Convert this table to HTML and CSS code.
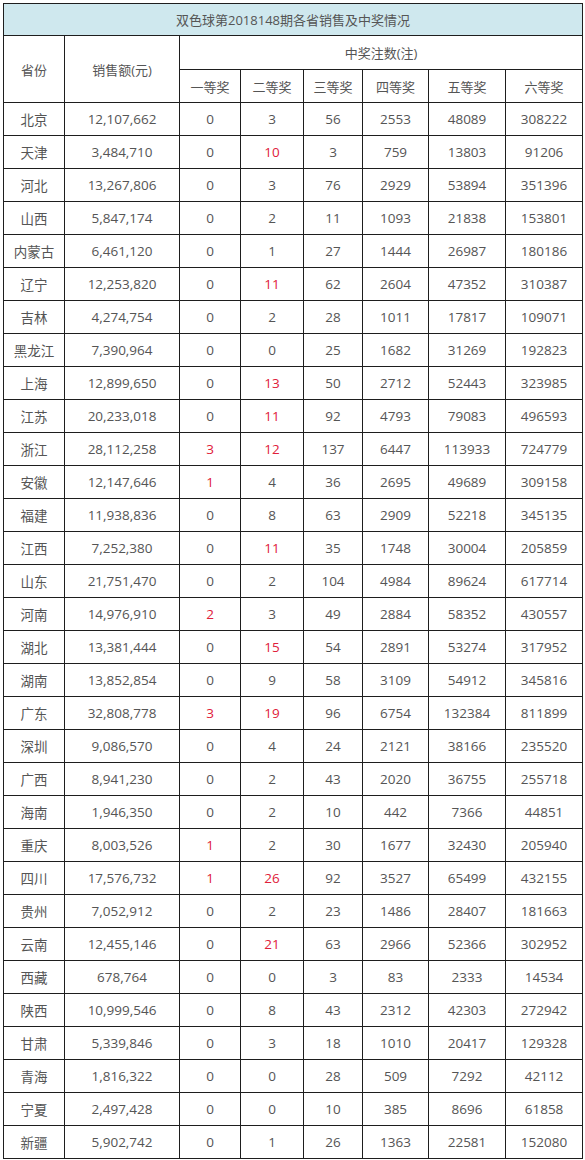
FILE: index.html
```html
<!DOCTYPE html>
<html lang="zh-CN">
<head>
<meta charset="utf-8">
<title>双色球第2018148期各省销售及中奖情况</title>
<link rel="stylesheet" href="styles.css">
</head>
<body>
<table class="lottery">
<colgroup>
<col class="c-prov"><col class="c-sales"><col class="c-p1"><col class="c-p2"><col class="c-p3"><col class="c-p4"><col class="c-p5"><col class="c-p6">
</colgroup>
<thead>
<tr class="title-row"><th colspan="8">双色球第2018148期各省销售及中奖情况</th></tr>
<tr class="head-row"><th rowspan="2">省份</th><th rowspan="2">销售额(元)</th><th colspan="6">中奖注数(注)</th></tr>
<tr class="head-row"><th>一等奖</th><th>二等奖</th><th>三等奖</th><th>四等奖</th><th>五等奖</th><th>六等奖</th></tr>
</thead>
<tbody>
<tr><td>北京</td><td>12,107,662</td><td>0</td><td>3</td><td>56</td><td>2553</td><td>48089</td><td>308222</td></tr>
<tr><td>天津</td><td>3,484,710</td><td>0</td><td class="red">10</td><td>3</td><td>759</td><td>13803</td><td>91206</td></tr>
<tr><td>河北</td><td>13,267,806</td><td>0</td><td>3</td><td>76</td><td>2929</td><td>53894</td><td>351396</td></tr>
<tr><td>山西</td><td>5,847,174</td><td>0</td><td>2</td><td>11</td><td>1093</td><td>21838</td><td>153801</td></tr>
<tr><td>内蒙古</td><td>6,461,120</td><td>0</td><td>1</td><td>27</td><td>1444</td><td>26987</td><td>180186</td></tr>
<tr><td>辽宁</td><td>12,253,820</td><td>0</td><td class="red">11</td><td>62</td><td>2604</td><td>47352</td><td>310387</td></tr>
<tr><td>吉林</td><td>4,274,754</td><td>0</td><td>2</td><td>28</td><td>1011</td><td>17817</td><td>109071</td></tr>
<tr><td>黑龙江</td><td>7,390,964</td><td>0</td><td>0</td><td>25</td><td>1682</td><td>31269</td><td>192823</td></tr>
<tr><td>上海</td><td>12,899,650</td><td>0</td><td class="red">13</td><td>50</td><td>2712</td><td>52443</td><td>323985</td></tr>
<tr><td>江苏</td><td>20,233,018</td><td>0</td><td class="red">11</td><td>92</td><td>4793</td><td>79083</td><td>496593</td></tr>
<tr><td>浙江</td><td>28,112,258</td><td class="red">3</td><td class="red">12</td><td>137</td><td>6447</td><td>113933</td><td>724779</td></tr>
<tr><td>安徽</td><td>12,147,646</td><td class="red">1</td><td>4</td><td>36</td><td>2695</td><td>49689</td><td>309158</td></tr>
<tr><td>福建</td><td>11,938,836</td><td>0</td><td>8</td><td>63</td><td>2909</td><td>52218</td><td>345135</td></tr>
<tr><td>江西</td><td>7,252,380</td><td>0</td><td class="red">11</td><td>35</td><td>1748</td><td>30004</td><td>205859</td></tr>
<tr><td>山东</td><td>21,751,470</td><td>0</td><td>2</td><td>104</td><td>4984</td><td>89624</td><td>617714</td></tr>
<tr><td>河南</td><td>14,976,910</td><td class="red">2</td><td>3</td><td>49</td><td>2884</td><td>58352</td><td>430557</td></tr>
<tr><td>湖北</td><td>13,381,444</td><td>0</td><td class="red">15</td><td>54</td><td>2891</td><td>53274</td><td>317952</td></tr>
<tr><td>湖南</td><td>13,852,854</td><td>0</td><td>9</td><td>58</td><td>3109</td><td>54912</td><td>345816</td></tr>
<tr><td>广东</td><td>32,808,778</td><td class="red">3</td><td class="red">19</td><td>96</td><td>6754</td><td>132384</td><td>811899</td></tr>
<tr><td>深圳</td><td>9,086,570</td><td>0</td><td>4</td><td>24</td><td>2121</td><td>38166</td><td>235520</td></tr>
<tr><td>广西</td><td>8,941,230</td><td>0</td><td>2</td><td>43</td><td>2020</td><td>36755</td><td>255718</td></tr>
<tr><td>海南</td><td>1,946,350</td><td>0</td><td>2</td><td>10</td><td>442</td><td>7366</td><td>44851</td></tr>
<tr><td>重庆</td><td>8,003,526</td><td class="red">1</td><td>2</td><td>30</td><td>1677</td><td>32430</td><td>205940</td></tr>
<tr><td>四川</td><td>17,576,732</td><td class="red">1</td><td class="red">26</td><td>92</td><td>3527</td><td>65499</td><td>432155</td></tr>
<tr><td>贵州</td><td>7,052,912</td><td>0</td><td>2</td><td>23</td><td>1486</td><td>28407</td><td>181663</td></tr>
<tr><td>云南</td><td>12,455,146</td><td>0</td><td class="red">21</td><td>63</td><td>2966</td><td>52366</td><td>302952</td></tr>
<tr><td>西藏</td><td>678,764</td><td>0</td><td>0</td><td>3</td><td>83</td><td>2333</td><td>14534</td></tr>
<tr><td>陕西</td><td>10,999,546</td><td>0</td><td>8</td><td>43</td><td>2312</td><td>42303</td><td>272942</td></tr>
<tr><td>甘肃</td><td>5,339,846</td><td>0</td><td>3</td><td>18</td><td>1010</td><td>20417</td><td>129328</td></tr>
<tr><td>青海</td><td>1,816,322</td><td>0</td><td>0</td><td>28</td><td>509</td><td>7292</td><td>42112</td></tr>
<tr><td>宁夏</td><td>2,497,428</td><td>0</td><td>0</td><td>10</td><td>385</td><td>8696</td><td>61858</td></tr>
<tr><td>新疆</td><td>5,902,742</td><td>0</td><td>1</td><td>26</td><td>1363</td><td>22581</td><td>152080</td></tr>
</tbody>
</table>
</body>
</html>
```
FILE: styles.css
```css
html, body {
  margin: 0;
  padding: 0;
  background: #ffffff;
}
body {
  padding: 3px 0 0 3px;
  font-family: "Open Sans", "Noto Sans CJK SC", sans-serif;
  font-size: 13px;
  color: #555555;
}
.lottery {
  border-collapse: collapse;
  table-layout: fixed;
  width: 579px;
}
.c-prov { width: 61px; }
.c-sales { width: 115px; }
.c-p1 { width: 61px; }
.c-p2 { width: 63px; }
.c-p3 { width: 59px; }
.c-p4 { width: 66px; }
.c-p5 { width: 77px; }
.c-p6 { width: 77px; }
.lottery th,
.lottery td {
  border: 1px solid #1e1e1e;
  padding: 0;
  text-align: center;
  vertical-align: middle;
  font-weight: normal;
  white-space: nowrap;
}
.title-row th {
  height: 31px;
  background: #cfe8ee;
}
.head-row:nth-child(2) th {
  height: 33px;
}
.head-row:nth-child(3) th {
  height: 32px;
}
.lottery tbody td {
  height: 32px;
  font-size: 13.5px;
}
.lottery td.red {
  color: #e0203a;
}
```
